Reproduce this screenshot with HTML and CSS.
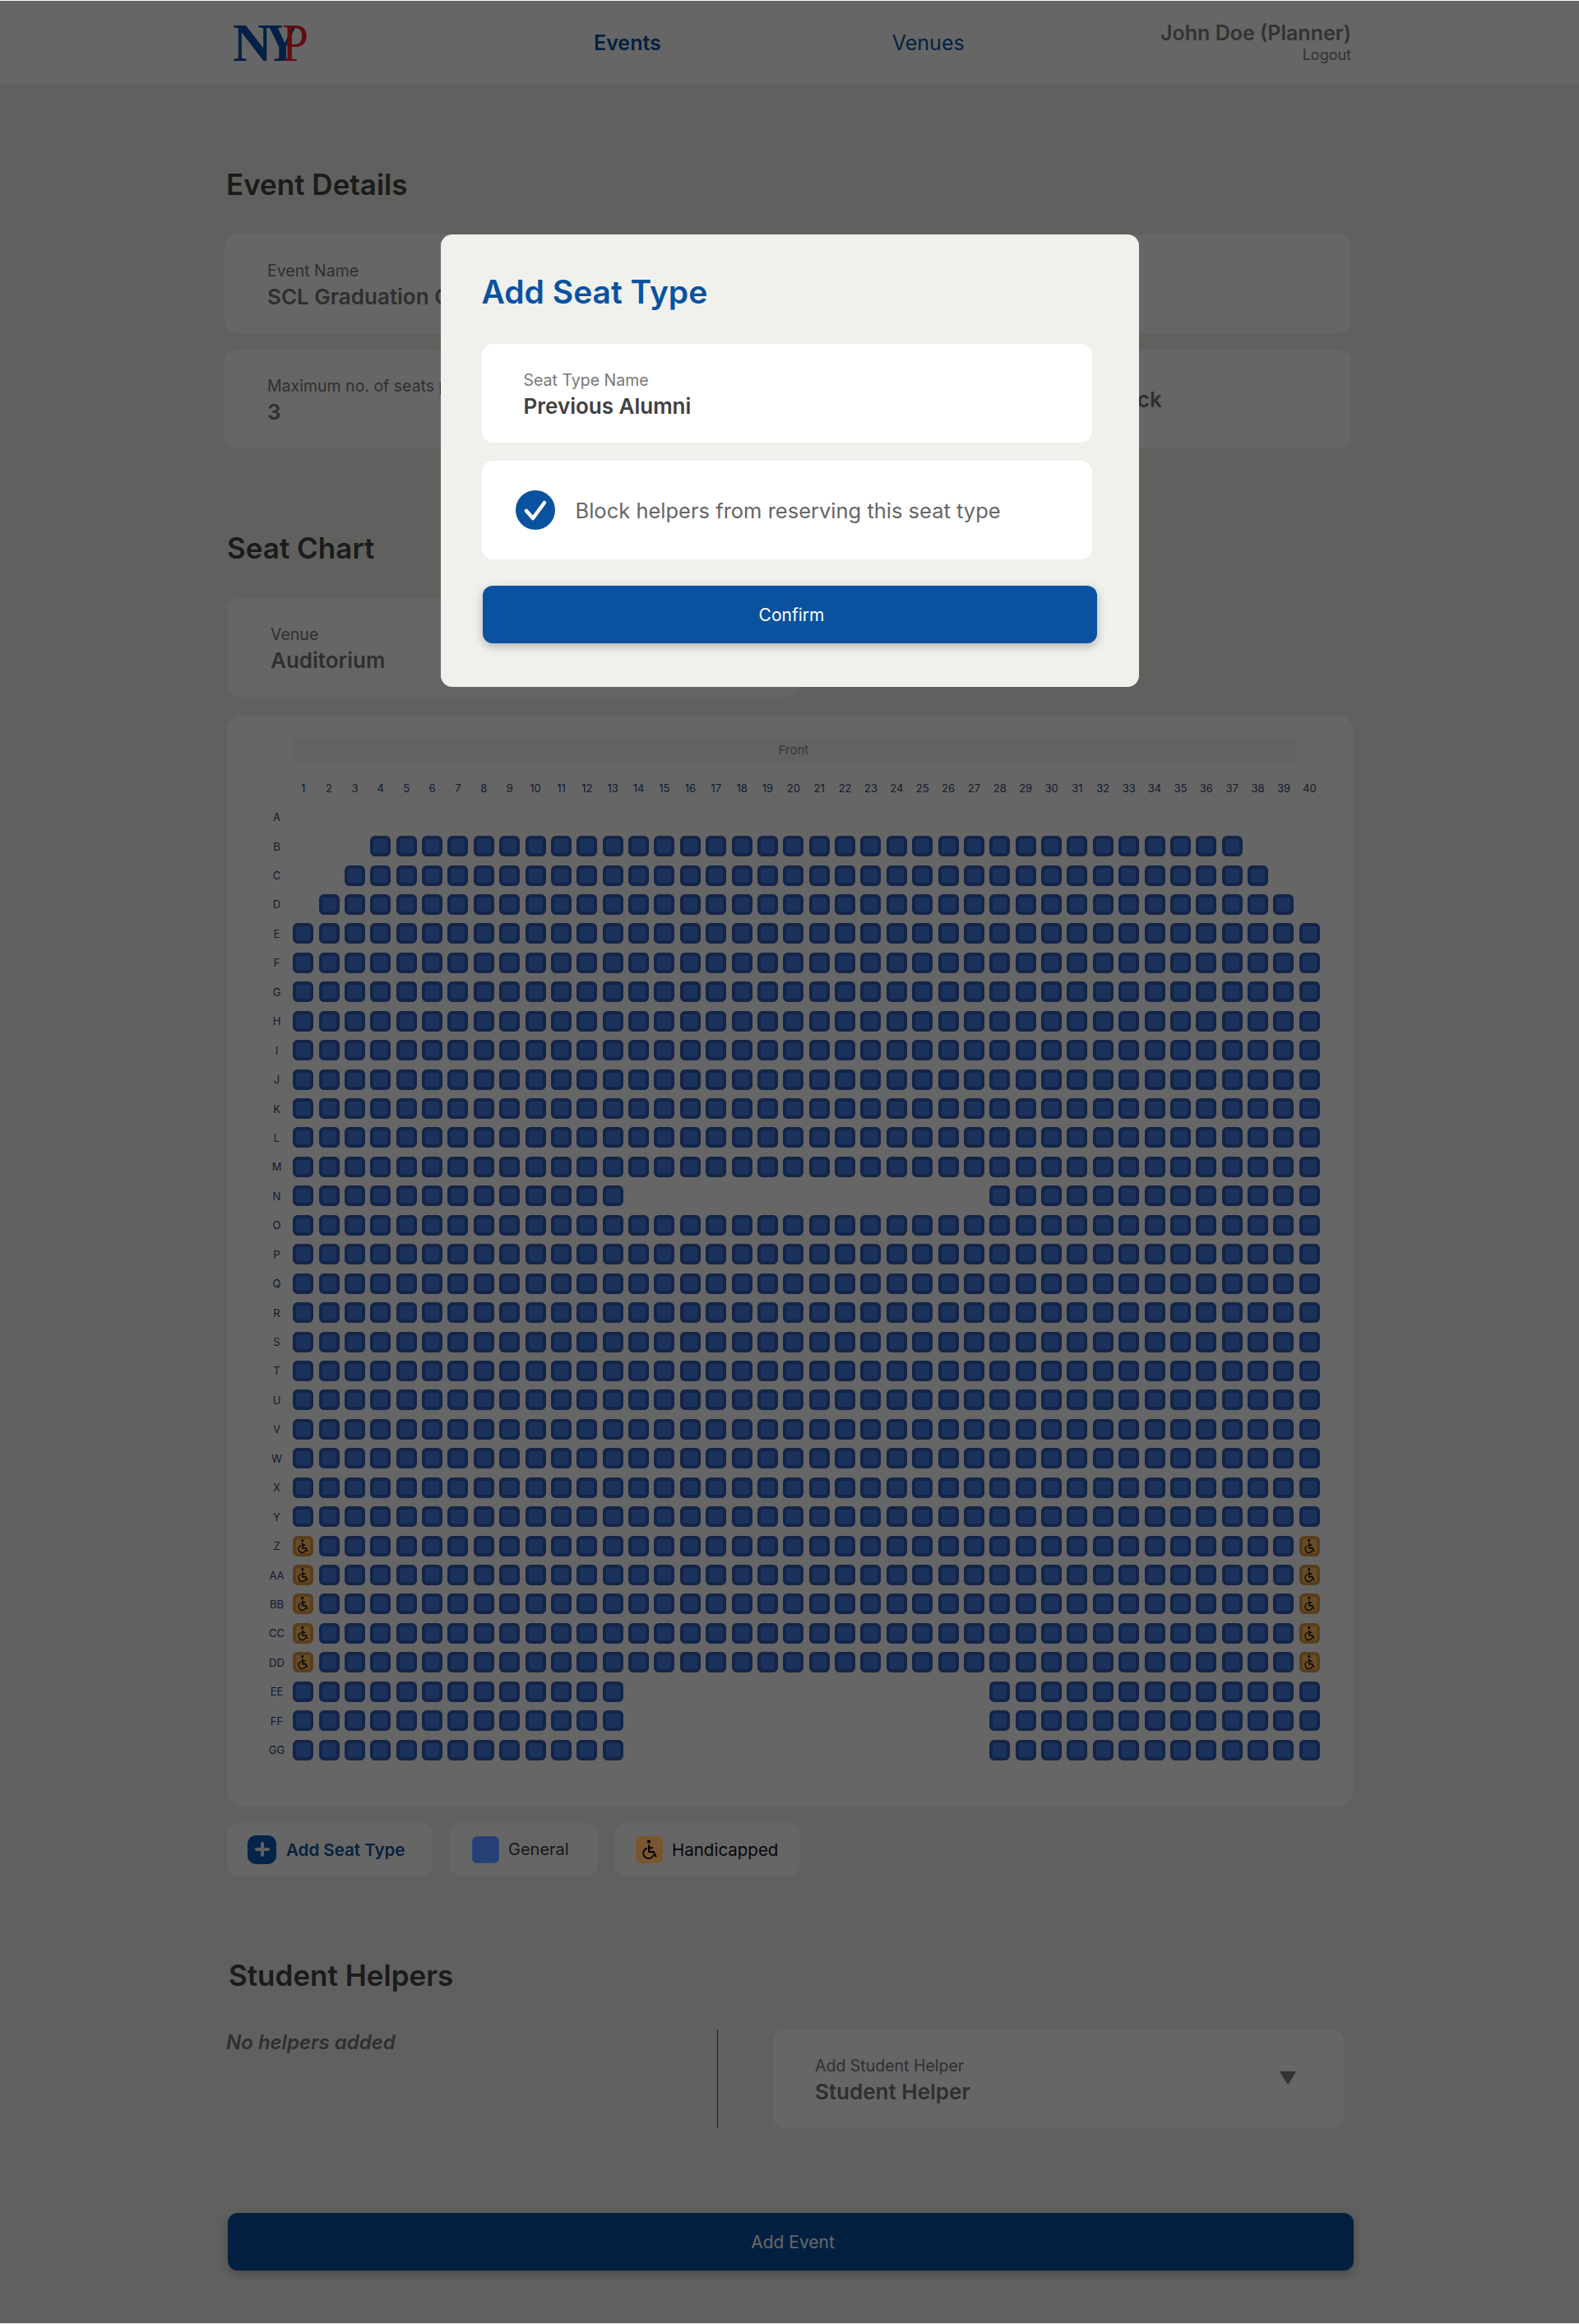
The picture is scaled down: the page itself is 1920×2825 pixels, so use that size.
FILE: index.html
```html
<!DOCTYPE html>
<html lang="en">
<head>
  <meta charset="UTF-8">
  <title>Add Event</title>
  <link rel="stylesheet" href="styles.css">
</head>
<body>
  <header class="topbar">
    <div class="logo"><span class="logo-n">N</span><span class="logo-y">Y</span><span class="logo-p">P</span></div>
    <nav class="nav">
      <a class="nav-link nav-link-active">Events</a>
      <a class="nav-link">Venues</a>
    </nav>
    <div class="user">
      <div class="user-name">John Doe (Planner)</div>
      <div class="user-logout">Logout</div>
    </div>
  </header>

  <main class="page">
    <h2 class="section-title details-title">Event Details</h2>
    <div class="details-grid">
      <div class="field">
        <div class="field-label">Event Name</div>
        <div class="field-value">SCL Graduation Ceremony</div>
      </div>
      <div class="field"></div>
      <div class="field">
        <div class="field-label">Maximum no. of seats per student</div>
        <div class="field-value">3</div>
      </div>
      <div class="field field-block">
        <div class="field-value">Block</div>
      </div>
    </div>

    <h2 class="section-title chart-title">Seat Chart</h2>
    <div class="field venue-field">
      <div class="field-label">Venue</div>
      <div class="field-value">Auditorium</div>
    </div>

    <section class="chart">
      <div class="stage">Front</div>
      <div class="seat-grid" id="seatGrid"></div>
    </section>

    <div class="legend">
      <div class="legend-item legend-add">
        <span class="plus-icon">
          <svg viewBox="0 0 20 20" width="20" height="20"><path d="M10 3v14M3 10h14" stroke="#f0f1ed" stroke-width="4" stroke-linecap="round" fill="none"/></svg>
        </span>
        <span class="legend-add-text">Add Seat Type</span>
      </div>
      <div class="legend-item legend-general">
        <span class="swatch swatch-general"></span>
        <span class="legend-text">General</span>
      </div>
      <div class="legend-item legend-handicapped">
        <span class="swatch swatch-handicapped">
          <svg viewBox="0 0 24 24" width="24" height="24"><circle cx="11" cy="2.6" r="2.1" fill="#000"/><path d="M11 6.5v8.6h5.6l3.2 6.2M11 10.2h5" stroke="#000" stroke-width="2" fill="none"/><path d="M8.8 10.6a6.4 6.4 0 1 0 7.9 8.2" stroke="#000" stroke-width="1.7" fill="none"/></svg>
        </span>
        <span class="legend-text legend-text-dark">Handicapped</span>
      </div>
    </div>

    <h2 class="section-title helpers-title">Student Helpers</h2>
    <div class="helpers">
      <div class="helpers-empty">No helpers added</div>
      <div class="helpers-divider"></div>
      <div class="field helper-select">
        <div>
          <div class="field-label">Add Student Helper</div>
          <div class="field-value">Student Helper</div>
        </div>
        <svg class="select-arrow" viewBox="0 0 20 17" width="20" height="17"><path d="M2 2h16l-8 13z" fill="#808080" stroke="#808080" stroke-width="2.5" stroke-linejoin="round"/></svg>
      </div>
    </div>

    <button class="btn btn-add-event">Add Event</button>
  </main>

  <div class="overlay">
    <div class="modal">
      <h2 class="modal-title">Add Seat Type</h2>
      <div class="field modal-field">
        <div class="field-label">Seat Type Name</div>
        <div class="field-value">Previous Alumni</div>
      </div>
      <div class="field modal-field modal-check">
        <span class="check-circle">
          <svg viewBox="0 0 48 48" width="48" height="48"><path d="M13 25l8 9 14-19" stroke="#fff" stroke-width="4.5" stroke-linecap="round" stroke-linejoin="round" fill="none"/></svg>
        </span>
        <span class="check-text">Block helpers from reserving this seat type</span>
      </div>
      <button class="btn btn-confirm">Confirm</button>
    </div>
  </div>

  <script src="seats.js"></script>
</body>
</html>
```

FILE: styles.css
```css
* {
  box-sizing: border-box;
}
body {
  margin: 0;
  position: relative;
  background: #f0f1ed;
  font-family: Inter, "Liberation Sans", sans-serif;
  color: #4a4a4a;
}

/* top bar */
.topbar {
  display: flex;
  align-items: center;
  height: 103px;
  padding: 0 277px 0 283px;
  background: #fff;
}
.logo {
  display: flex;
  width: 92px;
  height: 44px;
  font-family: "Liberation Serif", serif;
  font-size: 66px;
  line-height: 44px;
}
.logo span {
  display: block;
  transform-origin: left center;
}
.logo-n,
.logo-y {
  color: #0a52b0;
  font-weight: bold;
}
.logo-n {
  margin-right: -8px;
}
.logo-y {
  margin-right: -27px;
  transform: scaleX(0.85);
}
.logo-p {
  color: #f02530;
  transform: scaleX(0.87);
}
.nav {
  display: flex;
  gap: 281px;
  margin-left: 347px;
}
.nav-link {
  font-size: 25px;
  color: #0a52a0;
}
.nav-link-active {
  font-weight: 600;
}
.user {
  margin-left: auto;
  text-align: right;
}
.user-name {
  font-size: 25px;
  font-weight: 600;
  line-height: 30px;
  color: #808080;
}
.user-logout {
  font-size: 18px;
  line-height: 24px;
  color: #808080;
}

/* page */
.page {
  padding: 101px 0 65px 273px;
}
.section-title {
  margin: 0;
  font-size: 35px;
  font-weight: 600;
  line-height: 40px;
  color: #454545;
}
.details-title {
  margin: 0 0 41px 2px;
}
.chart-title {
  margin: 101px 0 41px 3px;
}
.helpers-title {
  margin: 101px 0 46px 5px;
}
.details-grid {
  display: grid;
  grid-template-columns: 675px 675px;
  grid-auto-rows: 120px;
  gap: 20px;
}
.field {
  height: 120px;
  padding: 33px 0 0 52px;
  background: #fff;
  border-radius: 14px;
}
.field-label {
  font-size: 19.5px;
  line-height: 23px;
  color: #777;
}
.field-value {
  margin-top: 5px;
  font-size: 26px;
  font-weight: 600;
  line-height: 30px;
  color: #777;
}
.field-block {
  padding: 41px 0 0 375px;
}
.venue-field {
  width: 695px;
  margin-left: 4px;
}

/* seat chart */
.chart {
  width: 1369px;
  height: 1325px;
  margin: 23px 0 0 3px;
  padding: 27px 0 0 44px;
  background: #fff;
  border-radius: 18px;
}
.stage {
  width: 1220px;
  height: 30px;
  margin-left: 35px;
  background: #f5f5f5;
  border-radius: 6px;
  font-size: 15px;
  line-height: 30px;
  text-align: center;
  color: #8a8a8a;
}
.seat-grid {
  display: grid;
  grid-template-columns: 33px repeat(40, 31.38px);
  grid-auto-rows: 35.45px;
  margin-top: 13px;
}
.cell {
  display: flex;
  align-items: center;
  justify-content: center;
  font-size: 13px;
  color: #30436e;
}
.seat {
  display: flex;
  align-items: center;
  justify-content: center;
  flex: none;
  width: 25px;
  height: 25px;
  border: 4px solid #325cb4;
  border-radius: 6px;
  background: #447de6;
}
.seat svg {
  flex: none;
}
.seat-handicapped {
  border-color: #e19a46;
  background: #ffc060;
}

/* legend */
.legend {
  display: flex;
  gap: 20px;
  margin: 21px 0 0 3px;
}
.legend-item {
  display: flex;
  align-items: center;
  height: 64px;
  background: #fff;
  border-radius: 14px;
}
.legend-add {
  width: 250px;
  padding-left: 25px;
  gap: 12px;
}
.legend-general {
  width: 181px;
  padding-left: 28px;
  gap: 11px;
}
.legend-handicapped {
  width: 226px;
  padding-left: 26px;
  gap: 11px;
}
.plus-icon {
  display: flex;
  align-items: center;
  justify-content: center;
  width: 35px;
  height: 35px;
  background: #0a5ab8;
  border-radius: 10px;
}
.legend-add-text {
  font-size: 20.5px;
  font-weight: 600;
  color: #0a52a0;
}
.swatch {
  display: flex;
  align-items: center;
  justify-content: center;
  width: 33px;
  height: 33px;
  border-radius: 6px;
}
/* these two read brighter than the dimmed page, so they sit above the overlay */
.swatch-general {
  position: relative;
  z-index: 2;
  background: #263f74;
  border: 1px solid #2d4a82;
}
.swatch-handicapped {
  position: relative;
  z-index: 2;
  background: #7a5630;
}
.legend-text {
  font-size: 20px;
  color: #3a3a3a;
}
.legend-text-dark {
  font-size: 20.5px;
  color: #111;
}

/* helpers */
.helpers {
  display: flex;
}
.helpers-empty {
  width: 597px;
  margin-left: 2px;
  padding-top: 1px;
  font-size: 24px;
  font-weight: 600;
  font-style: italic;
  color: #777;
}
.helpers-divider {
  width: 1px;
  height: 120px;
  background: #444;
}
.helper-select {
  display: flex;
  align-items: flex-start;
  justify-content: space-between;
  width: 694px;
  margin-left: 67px;
  padding-left: 51px;
  padding-right: 58px;
}
.select-arrow {
  margin-top: 17px;
}

/* buttons */
.btn {
  display: block;
  height: 70px;
  padding: 0 0 0 5px;
  border: none;
  border-radius: 12px;
  font-family: inherit;
  font-size: 21px;
  color: #fff;
  box-shadow: 0 4px 12px rgba(0, 0, 0, 0.25);
}
.btn-add-event {
  width: 1369px;
  margin: 103px 0 0 4px;
  background: #0a52a0;
}

/* modal */
.overlay {
  position: absolute;
  top: 1px;
  right: 0;
  bottom: 1px;
  left: 0;
  display: flex;
  justify-content: center;
  align-items: flex-start;
  padding-top: 284px;
  background: rgba(0, 0, 0, 0.6);
}
.modal {
  width: 849px;
  height: 550px;
  padding: 46px 50px 0;
  background: #f0f1ed;
  border-radius: 14px;
}
.modal-title {
  margin: 0 0 39px;
  font-size: 39px;
  font-weight: 600;
  line-height: 48px;
  color: #0a52a0;
}
.modal-field {
  width: 742px;
  padding-left: 51px;
  margin-bottom: 22px;
}
.modal-field .field-label {
  color: #777;
}
.modal-field .field-value {
  color: #404040;
}
.modal-check {
  display: flex;
  align-items: center;
  gap: 25px;
  padding: 0 0 0 41px;
  margin-bottom: 32px;
}
.check-circle {
  display: block;
  width: 48px;
  height: 48px;
  background: #0a52a0;
  border-radius: 50%;
}
.check-text {
  font-size: 25.5px;
  color: #666;
}
.btn-confirm {
  width: 747px;
  margin-left: 1px;
  background: #0a52a0;
}
```

FILE: seats.js
```js
// rows A..Z then AA..GG
var rows = "ABCDEFGHIJKLMNOPQRSTUVWXYZ".split("");
"ABCDEFG".split("").forEach(function (c) { rows.push(c + c); });

var wheelchair = '<svg viewBox="0 0 24 24" width="17" height="17"><circle cx="11" cy="2.6" r="2.1" fill="#000"/><path d="M11 6.5v8.6h5.6l3.2 6.2M11 10.2h5" stroke="#000" stroke-width="2" fill="none"/><path d="M8.8 10.6a6.4 6.4 0 1 0 7.9 8.2" stroke="#000" stroke-width="1.7" fill="none"/></svg>';

var grid = document.getElementById("seatGrid");

function addCell(text, inner) {
  var cell = document.createElement("div");
  cell.className = "cell";
  if (text) cell.textContent = text;
  if (inner) cell.innerHTML = inner;
  grid.appendChild(cell);
}

function hasSeat(row, col) {
  if (row === "A") return false;
  if (row === "B") return col >= 4 && col <= 37;
  if (row === "C") return col >= 3 && col <= 38;
  if (row === "D") return col >= 2 && col <= 39;
  if (row === "N" || row === "EE" || row === "FF" || row === "GG") return col <= 13 || col >= 28;
  return true;
}

var handicapped = ["Z", "AA", "BB", "CC", "DD"];

addCell();
for (var i = 1; i <= 40; i++) addCell(String(i));

rows.forEach(function (row) {
  addCell(row);
  for (var col = 1; col <= 40; col++) {
    if (!hasSeat(row, col)) {
      addCell();
    } else if (handicapped.indexOf(row) >= 0 && (col === 1 || col === 40)) {
      addCell(null, '<div class="seat seat-handicapped">' + wheelchair + "</div>");
    } else {
      addCell(null, '<div class="seat"></div>');
    }
  }
});
```
